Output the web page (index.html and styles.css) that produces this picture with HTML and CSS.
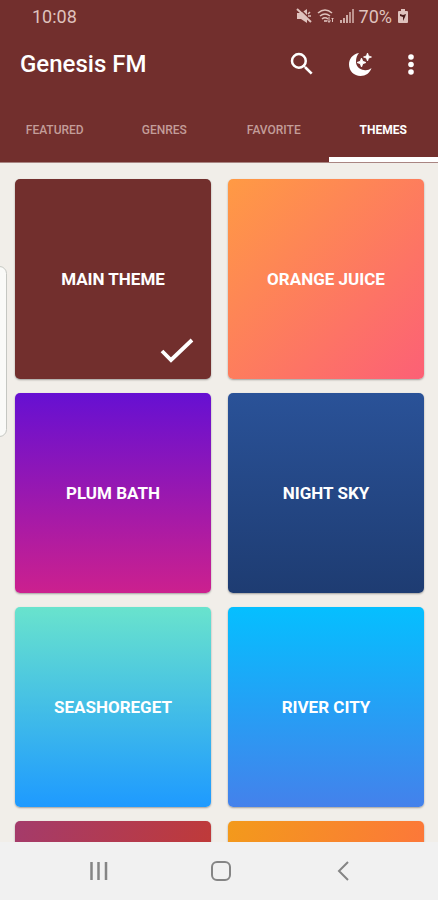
FILE: index.html
```html
<!DOCTYPE html>
<html lang="en">
<head>
<meta charset="utf-8">
<meta name="viewport" content="width=device-width, initial-scale=1">
<title>Genesis FM</title>
<link rel="stylesheet" href="styles.css">
</head>
<body>
<header class="header">
  <div class="status">
    <span>10:08</span>
    <div class="status-icons">
      <svg width="16" height="16" viewBox="0 0 16 16" fill="currentColor"><path d="M1 5h4l6-4v14l-6-4H1z"/><path d="M3 0l13 13" stroke="#722f2d" stroke-width="1.500"/><path d="M1 1l14 13" stroke="currentColor" stroke-width="2"/><path d="M12 6l2-2M12 8h3" stroke="currentColor" stroke-width="1.500"/></svg>
      <svg width="18" height="16" viewBox="0 0 18 16" fill="none" stroke="currentColor" stroke-width="1.600"><path d="M1 5q7-6 14 0M3 8q5-4 10 0M5 11q3-2.500 6 0"/><path d="M7 13h3" /><path d="M12 9v5M10.500 12.500l1.500 2 1.500-2M15.500 14v-4M14.500 11l1-1 1 1" stroke-width="1"/></svg>
      <svg width="14" height="16" viewBox="0 0 14 16" fill="currentColor" opacity=".85"><path d="M0 12h2v3H0zM3 10h2v5H3zM6 7h2v8H6z"/><path d="M9 4h2v11H9zM12 1h2v14h-2z" opacity=".8"/></svg>
      <span class="battery-level">70%</span>
      <svg width="12" height="16" viewBox="0 0 12 16"><path fill="currentColor" d="M4 1h4v2h2q1 0 1 1v10q0 1-1 1H2q-1 0-1-1V4q0-1 1-1h2z"/><path fill="#481a19" d="M3 6l3 1 3-1-1 3-2 4V9L3 8z"/></svg>
    </div>
  </div>
  <div class="toolbar">
    <h1 class="title">Genesis FM</h1>
    <button class="icon-button" aria-label="Search"><svg width="30" height="30" viewBox="0 0 24 24" fill="currentColor"><path d="M15.500 14h-.79l-.28-.27A6.470 6.470 0 0 0 16 9.500 6.500 6.500 0 1 0 9.500 16c1.610 0 3.090-.59 4.230-1.570l.27.28v.79l5 4.990L20.490 19zM9.500 14a4.500 4.500 0 1 1 0-9 4.500 4.500 0 0 1 0 9z"/></svg></button>
    <button class="icon-button" aria-label="Night mode"><svg width="30" height="30" viewBox="0 0 30 30" fill="currentColor"><path d="M14 4C7.500 5 4 10 4 15.500 4 22 9 27 15.500 27c5 0 9.500-3 11-8-2.500 2-5 2.500-7.500 2C14 20.500 11 17 11 12.500c0-3.500 1-6.500 3-8.500z"/><path d="M16.500 9l1.300 3.200L21 13.500l-3.200 1.300-1.300 3.200-1.300-3.200-3.200-1.300 3.200-1.300zM22.500 4l1.100 2.900L26.500 8l-2.900 1.100L22.500 12l-1.100-2.900L18.500 8l2.900-1.100z" stroke="currentColor" stroke-width=".8"/></svg></button>
    <button class="icon-button" aria-label="More options"><svg width="16" height="30" viewBox="0 0 16 30" fill="currentColor"><circle cx="8" cy="8" r="2.800"/><circle cx="8" cy="15.500" r="2.800"/><circle cx="8" cy="23" r="2.800"/></svg></button>
  </div>
  <nav class="tabs">
    <a href="#featured">FEATURED</a>
    <a href="#genres">GENRES</a>
    <a href="#favorite">FAVORITE</a>
    <a href="#themes" class="active" aria-current="page">THEMES</a>
  </nav>
</header>
<main class="content">
  <div class="edge-handle"></div>
  <div class="grid">
    <button class="card main-theme">MAIN THEME<svg class="check" width="34" height="26" viewBox="0 0 34 26" fill="none" stroke="currentColor" stroke-width="3.800"><path d="M2 13l9 9L32 2"/></svg></button>
    <button class="card orange">ORANGE JUICE</button>
    <button class="card plum">PLUM BATH</button>
    <button class="card night">NIGHT SKY</button>
    <button class="card seashore">SEASHOREGET</button>
    <button class="card river">RIVER CITY</button>
    <button class="card crimson" aria-label="Crimson"></button>
    <button class="card amber" aria-label="Amber"></button>
  </div>
</main>
<footer class="navbar">
  <button aria-label="Recent apps"><svg width="20" height="20" viewBox="0 0 20 20" stroke="currentColor" stroke-width="2.500"><path d="M2.500 1v18M9.500 1v18M17 1v18"/></svg></button>
  <button aria-label="Home"><svg width="20" height="20" viewBox="0 0 20 20" fill="none" stroke="currentColor" stroke-width="2"><rect x="1" y="1" width="18" height="18" rx="5"/></svg></button>
  <button aria-label="Back"><svg width="20" height="20" viewBox="0 0 20 20" fill="none" stroke="currentColor" stroke-width="2"><path d="M15 1l-9 9 9 9"/></svg></button>
</footer>
</body>
</html>
```
FILE: styles.css
```css
* { box-sizing: border-box; }

body {
  margin: 0;
  height: 100vh;
  display: flex;
  flex-direction: column;
  background: #f1eee9;
  color: #fff;
  font-family: Roboto, sans-serif;
}

button {
  border: 0;
  padding: 0;
  background: none;
  color: inherit;
  font: inherit;
}

svg { display: block; }

.header {
  flex: none;
  background: #722f2d;
  border-bottom: 1px solid #a98582;
}

.status {
  display: flex;
  justify-content: space-between;
  align-items: center;
  height: 32px;
  padding: 0 29px 0 32px;
  font-size: 18px;
  color: #dfc2bd;
}

.status-icons {
  display: flex;
  align-items: center;
  gap: 5px;
}

.toolbar {
  display: flex;
  align-items: center;
  height: 64px;
  padding: 0 19px 0 20px;
  gap: 28px;
}

.title {
  flex: 1;
  margin: 0;
  font-size: 24px;
  font-weight: 500;
}

.tabs {
  display: grid;
  grid-template-columns: repeat(4, 1fr);
  height: 66px;
}

.tabs a {
  display: flex;
  align-items: center;
  justify-content: center;
  border-bottom: 5px solid transparent;
  padding-top: 6px;
  color: #c39d99;
  font-size: 12px;
  font-weight: 500;
  text-decoration: none;
}

.tabs .active {
  color: #fff;
  border-color: #fff;
  font-weight: 700;
}

.content {
  position: relative;
  flex: 1;
  min-height: 0;
  overflow: hidden;
}

.edge-handle {
  position: absolute;
  left: -8px;
  top: 103px;
  width: 15px;
  height: 171px;
  background: #fafaf8;
  border: 1px solid #c5c7c2;
  border-radius: 8px;
}

.grid {
  display: grid;
  grid-template-columns: 1fr 1fr;
  grid-auto-rows: 200px;
  gap: 14px 17px;
  padding: 16px 14px 16px 15px;
}

.card {
  position: relative;
  border-radius: 5px;
  box-shadow: 0 1px 2px #0005;
  font-size: 17px;
  font-weight: 700;
}

.check {
  position: absolute;
  right: 17px;
  bottom: 15px;
}

.main-theme { background: #722f2d; }
.orange { background: linear-gradient(135deg, #ff9a44, #fc6076); }
.plum { background: linear-gradient(#6610d2, #cc208e); }
.night { background: linear-gradient(#2a5298, #1e3c72); }
.seashore { background: linear-gradient(#69e3cd, #1e9aff); }
.river { background: linear-gradient(#05bfff, #4481eb); }
.crimson { background: linear-gradient(110deg, #a43b6b, #c43a30 90%); }
.amber { background: linear-gradient(110deg, #f39a1b, #ff6d43); }

.navbar {
  flex: none;
  display: flex;
  justify-content: center;
  align-items: center;
  gap: 102px;
  height: 58px;
  padding-left: 4px;
  background: #f1f1f1;
  color: #858585;
}
```
